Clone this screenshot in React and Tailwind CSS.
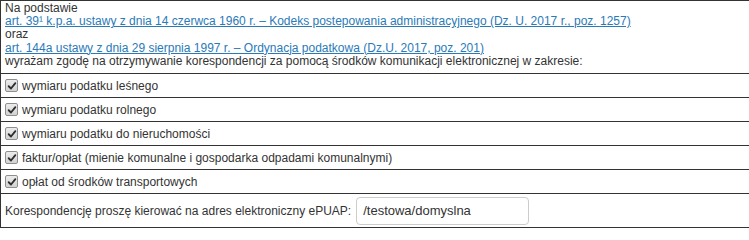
import { useState } from 'react';

const zakresy = [
  { id: 'lesny', label: 'wymiaru podatku leśnego' },
  { id: 'rolny', label: 'wymiaru podatku rolnego' },
  { id: 'nieruchomosci', label: 'wymiaru podatku do nieruchomości' },
  { id: 'faktury', label: 'faktur/opłat (mienie komunalne i gospodarka odpadami komunalnymi)' },
  { id: 'transport', label: 'opłat od środków transportowych' },
];

const Checkbox = ({ checked, onChange }) => (
  <span
    onClick={onChange}
    className="flex h-[13px] w-[13px] shrink-0 items-center justify-center rounded-[2px] border border-[#8f8f8f] bg-gradient-to-b from-[#ececec] to-[#d2d2d2]"
  >
    {checked && (
      <svg viewBox="0 0 12 12" className="h-[10px] w-[10px]">
        <path d="M2 6.3 L4.8 9 L10 2.6" fill="none" stroke="#2d2d2d" strokeWidth="2.2" strokeLinecap="round" strokeLinejoin="round" />
      </svg>
    )}
  </span>
);

export default function App() {
  const [checked, setChecked] = useState(() => Object.fromEntries(zakresy.map((z) => [z.id, true])));
  const [adres, setAdres] = useState('/testowa/domyslna');

  return (
    <div className="bg-white font-['Liberation_Sans',Arial,sans-serif] text-[12px] text-[#333]">
      <div className="border-l border-t border-[#333]">
        <div className="h-[73px] border-b border-[#333] pl-[4px] pt-[1px] leading-[13.2px]">
          <div>Na podstawie</div>
          <a href="#" className="text-[#2a7ab8] underline">
            art. 39¹ k.p.a. ustawy z dnia 14 czerwca 1960 r. – Kodeks postepowania administracyjnego (Dz. U. 2017 r., poz. 1257)
          </a>
          <div>oraz</div>
          <a href="#" className="text-[#2a7ab8] underline">
            art. 144a ustawy z dnia 29 sierpnia 1997 r. – Ordynacja podatkowa (Dz.U. 2017, poz. 201)
          </a>
          <div>wyrażam zgodę na otrzymywanie korespondencji za pomocą środków komunikacji elektronicznej w zakresie:</div>
        </div>

        {zakresy.map((z) => (
          <label key={z.id} className="flex h-[24px] items-center gap-[4px] border-b border-[#333] pl-[4px]">
            <Checkbox
              checked={checked[z.id]}
              onChange={() => setChecked((prev) => ({ ...prev, [z.id]: !prev[z.id] }))}
            />
            <span>{z.label}</span>
          </label>
        ))}

        <div className="flex h-[34px] items-center gap-[5px] border-b border-[#333] pl-[4px]">
          <span>Korespondencję proszę kierować na adres elektroniczny ePUAP:</span>
          <input
            value={adres}
            onChange={(e) => setAdres(e.target.value)}
            className="h-[28px] w-[173px] rounded-[4px] border border-[#ccc] px-[6px] text-[13px] text-[#333] outline-none"
          />
        </div>
      </div>
    </div>
  );
}
